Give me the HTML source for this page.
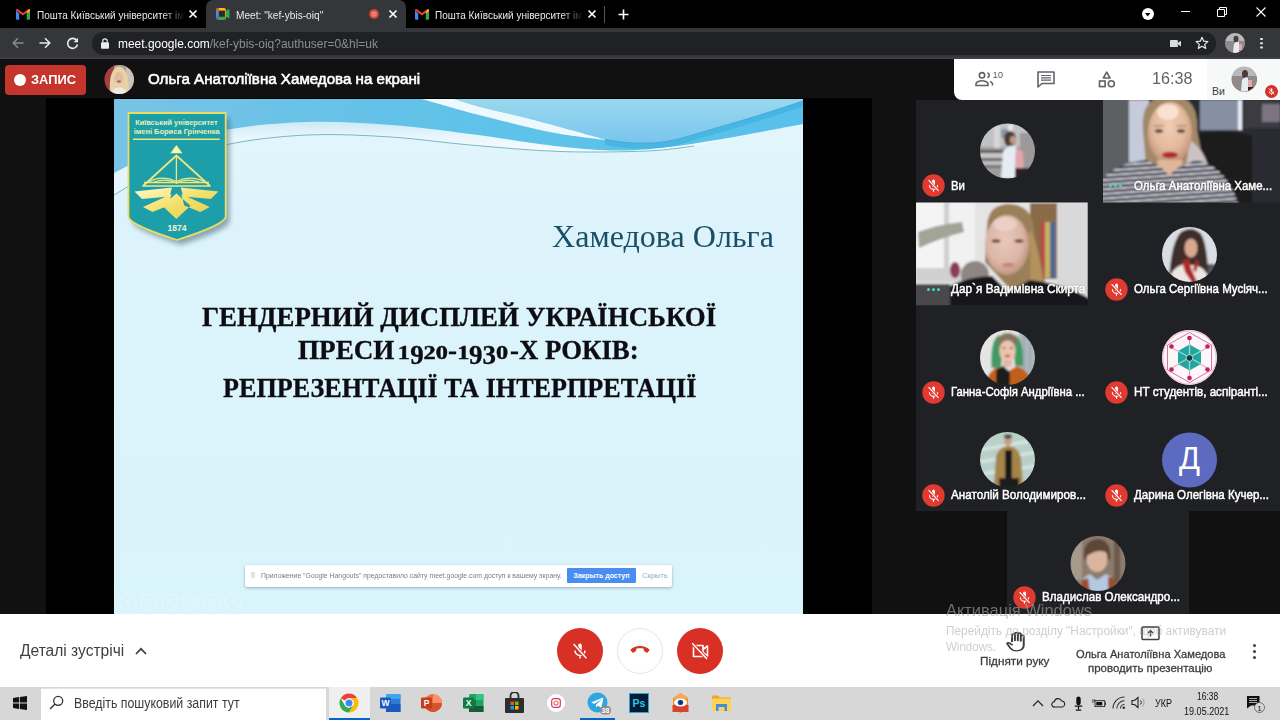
<!DOCTYPE html>
<html lang="uk">
<head>
<meta charset="utf-8">
<title>Meet: "kef-ybis-oiq"</title>
<style>
*{box-sizing:border-box;margin:0;padding:0}
html,body{width:1280px;height:720px;overflow:hidden;background:#111;font-family:"Liberation Sans",sans-serif;}
.abs{position:absolute}
#root{position:relative;width:1280px;height:720px;overflow:hidden;background:#111}
/* chrome */
#tabstrip{left:0;top:0;width:1280px;height:28px;background:#000}
#toolbar{left:0;top:28px;width:1280px;height:31px;background:#35363a;border-bottom:2px solid #3f4043}
#urlpill{left:92px;top:32px;width:1124px;height:23px;border-radius:12px;background:#202124}
.tabtxt{color:#e8eaed;font-size:11px;line-height:14px;white-space:nowrap;top:7.500px;transform-origin:0 50%;transform:scaleX(.908)}
#acttab{left:206px;top:0;width:200px;height:28px;background:#35363a;border-radius:7px 7px 0 0}
/* meet */
#blackband{left:45.500px;top:98px;width:826px;height:516px;background:#000}
#slide{left:114px;top:99px;width:689px;height:515px;background:#d9f1fa;overflow:hidden}
#tiles{left:916px;top:100px;width:364px;height:411px;background:#202124}
#tile9{left:1007px;top:511px;width:182px;height:103px;background:#202124}
.nm{color:#fff;font-size:12.500px;line-height:15px;white-space:nowrap;transform-origin:0 50%;-webkit-text-stroke:.5px #fff;text-shadow:0 0 2px rgba(0,0,0,.6)}
.mic{width:22px;height:22px;border-radius:50%;background:#d93025}
.av{width:55px;height:55px;border-radius:50%;overflow:hidden}
#botbar{left:0;top:614px;width:1280px;height:73px;background:#fff}
#taskbar{left:0;top:687px;width:1280px;height:33px;background:#d7d7d7}
.rbtn{width:46px;height:46px;border-radius:50%;background:#d93025;top:628px}
.gtxt{color:#3c4043;font-size:11.500px;white-space:nowrap;-webkit-text-stroke:.3px #3c4043}
.st{-webkit-text-stroke:.3px #0c0c12;font-family:"Liberation Serif",serif;font-weight:bold;font-size:26.400px;line-height:1;color:#0c0c12;white-space:nowrap;transform-origin:0 50%}
.os{font-size:19px;-webkit-text-stroke:.4px #0c0c12;display:inline-block;transform:scaleX(1.25);margin:0 1.200px}.dn{position:relative;top:5.500px}
.tk{top:693px;width:20px;height:20px}
</style>
</head>
<body>
<div id="root">

<!-- ===== CHROME TAB STRIP ===== -->
<div id="tabstrip" class="abs"></div>
<div id="acttab" class="abs"></div>
<div id="toolbar" class="abs"></div>
<div id="urlpill" class="abs"></div>
<!-- tab 1 -->
<svg class="abs" style="left:16px;top:9px" width="14" height="11" viewBox="0 0 14 11"><path d="M0 1.2v8.6a1 1 0 0 0 1 1h2.2V4.6L0 1.2z" fill="#4285f4"/><path d="M14 1.2v8.6a1 1 0 0 1-1 1h-2.200V4.600L14 1.200z" fill="#34a853"/><path d="M0 1.200 7 6.600l7-5.400V.900c0-1-1.200-1.300-2-.700L7 4.000 2 .200C1.200-.400 0-.100 0 .900z" fill="#ea4335"/><path d="M10.800 2.5 14 0v2.200l-3.200 2.400z" fill="#fbbc04"/></svg>
<div class="abs tabtxt" style="left:37px;width:163px;overflow:hidden;-webkit-mask-image:linear-gradient(90deg,#000 85%,transparent)">Пошта Київський університет імені</div>
<svg class="abs" style="left:188px;top:9px" width="10" height="10" viewBox="0 0 10 10"><path d="M1.500 1.500l7 7M8.500 1.500l-7 7" stroke="#fff" stroke-width="1.700"/></svg>
<!-- tab 2 active -->
<svg class="abs" style="left:216px;top:8px" width="13.500" height="11.500" viewBox="0 0 15 13"><rect x="0" y="0" width="11" height="13" rx="2" fill="#fbbc04"/><path d="M0 3h3V0H2a2 2 0 0 0-2 2z" fill="#ea4335"/><rect x="0" y="3" width="3" height="7" fill="#4285f4"/><path d="M0 10h3v3H2a2 2 0 0 1-2-2z" fill="#1a73e8"/><rect x="3" y="10" width="8" height="3" fill="#34a853"/><path d="M11 3 14.200 1.500c.400-.300.800 0 .800.400v9.200c0 .400-.400.700-.800.400L11 10z" fill="#34a853"/><rect x="3" y="3" width="7" height="7" fill="#2a2b2e"/></svg>
<div class="abs tabtxt" style="left:236px;transform:scaleX(.922)">Meet: "kef-ybis-oiq"</div>
<div class="abs" style="left:369px;top:9px;width:10px;height:10px;border-radius:50%;background:#ec7a70;border:2px solid #c4453b"></div>
<svg class="abs" style="left:387.500px;top:9px" width="10" height="10" viewBox="0 0 10 10"><path d="M1.500 1.500l7 7M8.500 1.500l-7 7" stroke="#fff" stroke-width="1.700"/></svg>
<!-- tab 3 -->
<svg class="abs" style="left:415px;top:9px" width="14" height="11" viewBox="0 0 14 11"><path d="M0 1.2v8.6a1 1 0 0 0 1 1h2.2V4.6L0 1.2z" fill="#4285f4"/><path d="M14 1.2v8.6a1 1 0 0 1-1 1h-2.200V4.600L14 1.200z" fill="#34a853"/><path d="M0 1.200 7 6.600l7-5.400V.900c0-1-1.200-1.300-2-.700L7 4.000 2 .200C1.200-.400 0-.100 0 .900z" fill="#ea4335"/><path d="M10.800 2.5 14 0v2.200l-3.200 2.400z" fill="#fbbc04"/></svg>
<div class="abs tabtxt" style="left:435px;width:163px;overflow:hidden;-webkit-mask-image:linear-gradient(90deg,#000 85%,transparent)">Пошта Київський університет імені</div>
<svg class="abs" style="left:587px;top:9px" width="10" height="10" viewBox="0 0 10 10"><path d="M1.500 1.500l7 7M8.500 1.500l-7 7" stroke="#fff" stroke-width="1.700"/></svg>
<div class="abs" style="left:604px;top:6px;width:1px;height:17px;background:#555"></div>
<svg class="abs" style="left:617.500px;top:8.500px" width="11" height="11" viewBox="0 0 11 11"><path d="M5.500 .5v10M.5 5.500h10" stroke="#fff" stroke-width="1.600"/></svg>
<!-- window controls -->
<div class="abs" style="left:1141.700px;top:8.300px;width:12px;height:12px;border-radius:50%;background:#fff"></div>
<svg class="abs" style="left:1145px;top:13px" width="5.400" height="3.800" viewBox="0 0 7 5"><path d="M0 0h7L3.500 4.500z" fill="#000"/></svg>
<div class="abs" style="left:1181px;top:11px;width:9px;height:1px;background:#fff"></div>
<svg class="abs" style="left:1217px;top:7px" width="10" height="10" viewBox="0 0 10 10"><path d="M.5 2.500h7v7h-7zM2.500 2.500v-2h7v7h-2" fill="none" stroke="#fff" stroke-width="1"/></svg>
<svg class="abs" style="left:1256px;top:7px" width="10" height="10" viewBox="0 0 10 10"><path d="M.5 .5l9 9M9.500 .5l-9 9" stroke="#fff" stroke-width="1.100"/></svg>
<!-- toolbar icons -->
<svg class="abs" style="left:12px;top:37px" width="12" height="12" viewBox="0 0 12 12"><path d="M11.500 6H1.500M6 1.200 1.200 6 6 10.800" fill="none" stroke="#8a8b8e" stroke-width="1.500"/></svg>
<svg class="abs" style="left:39px;top:37px" width="12" height="12" viewBox="0 0 12 12"><path d="M.5 6h10M6 1.200 10.800 6 6 10.800" fill="none" stroke="#e8eaed" stroke-width="1.500"/></svg>
<svg class="abs" style="left:65.500px;top:36.500px" width="13" height="13" viewBox="0 0 13 13"><path d="M10.600 3.300A5 5 0 1 0 11.500 7.500" fill="none" stroke="#e8eaed" stroke-width="1.600"/><path d="M12 .8v4.400H7.600z" fill="#e8eaed"/></svg>
<svg class="abs" style="left:101px;top:38px" width="8" height="11" viewBox="0 0 8 11"><rect x="0" y="4.200" width="8" height="6.500" rx="1" fill="#e8eaed"/><path d="M1.800 4.500V3a2.200 2.200 0 0 1 4.400 0v1.500" fill="none" stroke="#e8eaed" stroke-width="1.200"/></svg>
<div class="abs" style="left:118px;top:36px;font-size:13px;color:#fff;white-space:nowrap;transform-origin:0 50%;transform:scaleX(.92)">meet.google.com<span style="color:#8a8f94">/kef-ybis-oiq?authuser=0&amp;hl=uk</span></div>
<svg class="abs" style="left:1169.500px;top:39.500px" width="11" height="7.100" viewBox="0 0 14 9"><rect x="0" y="0" width="10" height="9" rx="1" fill="#dadce0"/><path d="M10 3.500 14 .8v7.400L10 5.500z" fill="#dadce0"/></svg>
<svg class="abs" style="left:1195px;top:36px" width="14" height="14" viewBox="0 0 14 14"><path d="M7 1.300l1.700 3.900 4.200.400-3.200 2.800 1 4.100L7 10.300 3.300 12.500l1-4.100L1.100 5.600l4.200-.400z" fill="none" stroke="#e8eaed" stroke-width="1.200" stroke-linejoin="round"/></svg>
<div class="abs" style="left:1225px;top:33px;width:20px;height:20px;border-radius:50%;background:radial-gradient(circle at 55% 60%,#e9e6e6 0 22%,#8d8482 45%,#5b5452 100%)"></div>
<div class="abs" style="left:1260.200px;top:37.700px;width:2.800px;height:2.800px;border-radius:50%;background:#e8eaed;box-shadow:0 4.300px 0 #e8eaed,0 8.600px 0 #e8eaed"></div>

<!-- ===== MEET MAIN ===== -->
<div class="abs" style="left:5px;top:65px;width:81px;height:30px;border-radius:4px;background:#c5352b"></div>
<div class="abs" style="left:14px;top:74px;width:12px;height:12px;border-radius:50%;background:#fff"></div>
<div class="abs" style="left:31px;top:72px;font-size:13px;font-weight:bold;color:#fff;white-space:nowrap;transform-origin:0 50%;transform:scaleX(.99)">ЗАПИС</div>
<div class="abs" style="left:104.500px;top:65px;width:29px;height:29px;border-radius:50%;background:radial-gradient(ellipse 30% 32% at 52% 48%,#e9c9b4 0 70%,transparent 100%),radial-gradient(ellipse 55% 60% at 50% 60%,#eadbb8 0 60%,transparent 100%),linear-gradient(90deg,#b04a44 0 35%,#a89a92 60%,#c9c2bb 100%)"></div>
<div class="abs" style="left:148px;top:70px;font-size:15.500px;-webkit-text-stroke:.6px #fff;color:#fff;white-space:nowrap;transform-origin:0 50%;transform:scaleX(.976)">Ольга Анатоліївна Хамедова на екрані</div>
<!-- right white panel -->
<div class="abs" style="left:954px;top:59px;width:326px;height:40.500px;background:#fff;border-radius:0 0 0 8px"></div>
<div class="abs" style="left:1207px;top:59px;width:73px;height:40.500px;background:#f7f8f8"></div>
<svg class="abs" style="left:975px;top:71px" width="20" height="16" viewBox="0 0 20 16"><circle cx="7" cy="4.300" r="2.700" fill="none" stroke="#5f6368" stroke-width="1.600"/><path d="M1 14.500v-1.800c0-2 4-3 6-3s6 1 6 3v1.800z" fill="none" stroke="#5f6368" stroke-width="1.600"/><path d="M12.500 1.800a2.700 2.700 0 0 1 0 5M15 10.500c1.500.600 2.500 1.400 2.500 2.600v1.400" fill="none" stroke="#5f6368" stroke-width="1.600"/></svg>
<div class="abs" style="left:992.500px;top:69px;font-size:9.500px;color:#5f6368">10</div>
<svg class="abs" style="left:1036.500px;top:71px" width="18" height="17" viewBox="0 0 18 17"><path d="M1 1h16v11.500H5L1 16z" fill="none" stroke="#5f6368" stroke-width="1.600" stroke-linejoin="round"/><path d="M4 4.500h10M4 6.800h10M4 9.100h10" stroke="#5f6368" stroke-width="1.200"/></svg>
<svg class="abs" style="left:1097.500px;top:71px" width="18" height="17" viewBox="0 0 18 17"><path d="M8.700 1.200 12 7H5.400z" fill="none" stroke="#5f6368" stroke-width="1.600" stroke-linejoin="round"/><rect x="1.500" y="10" width="5.600" height="5.600" fill="none" stroke="#5f6368" stroke-width="1.600"/><circle cx="13.300" cy="12.800" r="3" fill="none" stroke="#5f6368" stroke-width="1.600"/></svg>
<div class="abs" style="left:1152px;top:69px;font-size:17px;color:#5f6368;white-space:nowrap;transform-origin:0 50%;transform:scaleX(.95)">16:38</div>
<div class="abs" style="left:1212px;top:85px;font-size:10.500px;color:#3c4043;white-space:nowrap">Ви</div>
<div class="abs" style="left:1231.500px;top:66.500px;width:25px;height:25px;border-radius:50%;background:radial-gradient(circle at 55% 62%,#eceaea 0 20%,#8d8482 45%,#5b5452 100%)"></div>
<div class="abs" style="left:1264.500px;top:84.500px;width:13px;height:13px;border-radius:50%;background:#d93025"></div>
<svg class="abs" style="left:1264.500px;top:84.500px" width="13" height="13" viewBox="0 0 23 23"><rect x="10" y="5.600" width="3" height="7.300" rx="1.500" fill="#fff"/><path d="M7.400 11.300a4.100 4.100 0 0 0 8.200 0M11.500 15.400v2.400" fill="none" stroke="#fff" stroke-width="1.400"/><path d="M6.600 6.100 16.600 16.800" stroke="#fff" stroke-width="1.400"/></svg>
<div id="blackband" class="abs"></div>
<div id="slide" class="abs">
<!--SLIDEBG-->
<svg class="abs" style="left:0;top:0" width="689" height="515" viewBox="0 0 689 515">
<defs><linearGradient id="gbg" x1="0" y1="0" x2="0" y2="1"><stop offset="0" stop-color="#e4f6fc"/><stop offset=".25" stop-color="#dcf3fb"/><stop offset="1" stop-color="#daf4fb"/></linearGradient><linearGradient id="gtop" x1="0" y1="0" x2="1" y2="0"><stop offset="0" stop-color="#78c3e5"/><stop offset=".35" stop-color="#66c1e7"/><stop offset=".6" stop-color="#5dc3e9"/><stop offset="1" stop-color="#58c0ea"/></linearGradient><linearGradient id="gright" x1="0" y1="0" x2="0" y2="1"><stop offset="0" stop-color="#9ddbee"/><stop offset="1" stop-color="#79c5ee"/></linearGradient><linearGradient id="gwh" gradientUnits="userSpaceOnUse" x1="0" y1="20" x2="0" y2="54"><stop offset="0" stop-color="#c6e8f6"/><stop offset=".5" stop-color="#e8f6fc"/><stop offset="1" stop-color="#f7fcff"/></linearGradient><linearGradient id="gfade" gradientUnits="userSpaceOnUse" x1="0" y1="0" x2="150" y2="0"><stop offset="0" stop-color="#fff" stop-opacity=".15"/><stop offset="1" stop-color="#fff" stop-opacity="1"/></linearGradient><mask id="mfade" maskUnits="userSpaceOnUse" x="0" y="0" width="689" height="515"><rect width="689" height="515" fill="url(#gfade)"/></mask><filter id="wbl" x="-2%" y="-10%" width="104%" height="130%"><feGaussianBlur stdDeviation=".7"/></filter></defs>
<rect width="689" height="515" fill="url(#gbg)"/>
<g filter="url(#wbl)">
<path d="M0 -5L0.0 96.0C8.3 91.3 31.5 76.3 50.0 68.0C68.5 59.7 87.2 51.3 111.0 46.0C134.8 40.7 165.3 37.3 193.0 36.0C220.7 34.7 249.8 36.3 277.0 38.0C304.2 39.7 327.8 43.6 356.0 46.0C384.2 48.4 416.5 51.5 446.0 52.5C475.5 53.5 510.7 52.9 533.0 52.0C555.3 51.1 572.2 47.8 580.0 47.0L689 25L689 -5Z" fill="url(#gwh)" mask="url(#mfade)"/>
<path d="M-5 -5L-5 74L0.0 74.0C8.3 70.0 31.5 57.2 50.0 50.0C68.5 42.8 87.2 35.5 111.0 31.0C134.8 26.5 165.3 23.8 193.0 23.0C220.7 22.2 249.8 24.0 277.0 26.0C304.2 28.0 327.8 31.4 356.0 35.0C384.2 38.6 421.2 44.8 446.0 47.5C470.8 50.2 486.8 51.4 505.0 51.5C523.2 51.6 538.8 49.8 555.0 48.0C571.2 46.2 587.7 43.3 602.0 41.0C616.3 38.7 626.5 36.7 641.0 34.0C655.5 31.3 681.0 26.5 689.0 25.0L695 25L695 -5Z" fill="url(#gtop)"/>
<path d="M340 -5L340 0L340.0 0.0C344.3 1.3 353.3 4.7 366.0 8.0C378.7 11.3 401.5 16.3 416.0 20.0C430.5 23.7 440.5 26.6 453.0 30.0C465.5 33.4 484.7 38.8 491.0 40.5L491.0 40.5C495.8 41.1 509.3 43.8 520.0 44.0C530.7 44.2 541.3 44.5 555.0 42.0C568.7 39.5 587.7 33.1 602.0 29.0C616.3 24.9 626.5 22.0 641.0 17.5C655.5 13.0 681.0 4.6 689.0 2.0L695 3L695 -5Z" fill="url(#gright)"/>
<path d="M340.0 0.0C344.3 1.3 353.3 4.7 366.0 8.0C378.7 11.3 401.5 16.3 416.0 20.0C430.5 23.7 440.5 26.6 453.0 30.0C465.5 33.4 484.7 38.8 491.0 40.5L491.0 41.0C482.7 39.8 457.7 37.1 441.0 34.0C424.3 30.9 406.2 26.2 391.0 22.5C375.8 18.8 363.8 15.8 350.0 12.0C336.2 8.2 315.0 2.0 308.0 0.0Z" fill="#eef9fd"/>
<path d="M491.0 40.5C495.8 41.1 509.3 43.8 520.0 44.0C530.7 44.2 541.3 44.5 555.0 42.0C568.7 39.5 587.7 33.1 602.0 29.0C616.3 24.9 626.5 22.0 641.0 17.5C655.5 13.0 681.0 4.6 689.0 2.0" fill="none" stroke="#2fa9dc" stroke-width="5" opacity=".45" transform="translate(0,3)"/>
</g>
<path d="M0.0 96.0C8.3 91.3 31.5 76.3 50.0 68.0C68.5 59.7 87.2 51.3 111.0 46.0C134.8 40.7 165.3 37.3 193.0 36.0C220.7 34.7 249.8 36.3 277.0 38.0C304.2 39.7 327.8 43.6 356.0 46.0C384.2 48.4 416.5 51.5 446.0 52.5C475.5 53.5 510.7 52.9 533.0 52.0C555.3 51.1 572.2 47.8 580.0 47.0" fill="none" stroke="#5aa9b9" stroke-width="1" opacity=".8"/>
<path d="M491.0 40.5C495.8 41.1 509.3 43.8 520.0 44.0C530.7 44.2 541.3 44.5 555.0 42.0C568.7 39.5 587.7 33.1 602.0 29.0C616.3 24.9 626.5 22.0 641.0 17.5C655.5 13.0 681.0 4.6 689.0 2.0" fill="none" stroke="#3a9ed0" stroke-width="1" opacity=".7"/>
</svg>
<!--/SLIDEBG-->
<!--CREST-->
<svg class="abs" style="left:6px;top:6px" width="122" height="150" viewBox="-8 -8 122 150">
<defs><linearGradient id="gold" x1="0" y1="0" x2="1" y2="1"><stop offset="0" stop-color="#fffbd0"/><stop offset=".5" stop-color="#f3e06a"/><stop offset="1" stop-color="#e4cc50"/></linearGradient>
<filter id="csh" x="-20%" y="-20%" width="150%" height="150%"><feGaussianBlur stdDeviation="2.500"/></filter></defs>
<path d="M.5 0H97.700V104Q96 112 49 127Q2 112 .5 104Z" fill="#3a5a68" opacity=".5" filter="url(#csh)" transform="translate(4,5)"/>
<path d="M.5 0H97.700V104Q96 112 49 127Q2 112 .5 104Z" fill="#1c9fa9" stroke="#ecdc62" stroke-width="1.800"/>
<text x="48.400" y="11.700" font-family="Liberation Sans,sans-serif" font-size="6.400" font-weight="bold" fill="#eaf0b8" text-anchor="middle" textLength="82.500" lengthAdjust="spacingAndGlyphs">Київський університет</text>
<text x="48.700" y="20.800" font-family="Liberation Sans,sans-serif" font-size="6.400" font-weight="bold" fill="#eaf0b8" text-anchor="middle" textLength="86" lengthAdjust="spacingAndGlyphs">імені Бориса Грінченка</text>
<path d="M5 26.200H91.700" stroke="#f3e57c" stroke-width="1.500"/>
<path d="M48.400 32 54.400 40.300H42.400Z" fill="#fbf4ac"/>
<path d="M48.400 42.500 15 73H82ZM16 69.500H81" fill="none" stroke="#f3e57c" stroke-width="1.700" stroke-linejoin="round"/>
<path d="M48.400 44V71M20 69Q34 61.500 48.400 68.500Q63 61.500 77 69M26 69Q38 65 48.400 70Q59 65 71 69" fill="none" stroke="#f3e57c" stroke-width="1.300"/>
<path d="M6.500 78.500 44 74.500 41.500 83.500 14 86ZM90.300 78.500 52.800 74.500 55.300 83.500 82.800 86ZM15 94 43.500 81 40.500 92.500 24.500 99ZM81.800 94 53.300 81 56.300 92.500 72.300 99ZM48.400 80.500 62.500 92.700 48.400 106 34.300 92.700Z" fill="url(#gold)"/>
<text x="49" y="118.400" font-family="Liberation Sans,sans-serif" font-size="8.500" font-weight="bold" fill="#f6f2cc" text-anchor="middle" textLength="19" lengthAdjust="spacingAndGlyphs">1874</text>
</svg>

<!--/CREST-->
<!--SLIDETXT-->
<div class="abs st" style="left:87.500px;top:204.700px;transform:scaleX(1.019)">ГЕНДЕРНИЙ ДИСПЛЕЙ УКРАЇНСЬКОЇ</div>
<div class="abs st" style="left:184px;top:237.700px;transform:scaleX(1.027)">ПРЕСИ</div><div class="abs st" style="left:284px;top:237.700px;transform:scaleX(1.023)"><span class="os">1</span><span class="dn">9</span><span class="os">2</span><span class="os">0</span>-<span class="os">1</span><span class="dn">93</span><span class="os">0</span></div><div class="abs st" style="left:396px;top:237.700px;transform:scaleX(1.015)">-Х РОКІВ:</div>
<div class="abs st" style="left:108.500px;top:275.700px;transform:scaleX(.99)">РЕПРЕЗЕНТАЦІЇ ТА ІНТЕРПРЕТАЦІЇ</div>
<div class="abs" style="left:438.400px;top:122.200px;font-family:'Liberation Serif',serif;font-size:31.700px;line-height:1;color:#1a4f66;white-space:nowrap;transform-origin:0 50%;transform:scaleX(1.012)">Хамедова Ольга</div>
<!-- share notification -->
<div class="abs" style="left:131px;top:465.500px;width:426.500px;height:22px;background:#fff;border-radius:2px;box-shadow:0 1px 3px rgba(60,90,110,.45)"></div>
<div class="abs" style="left:136.500px;top:473px;width:4px;height:6px;border-radius:1px;background:#e3e3e3"></div>
<div class="abs" style="left:146.600px;top:472px;font-size:7.500px;line-height:9px;color:#7d7d7d;white-space:nowrap;transform-origin:0 50%;transform:scaleX(.914)">Приложение "Google Hangouts" предоставило сайту meet.google.com доступ к вашему экрану.</div>
<div class="abs" style="left:453px;top:469px;width:69px;height:15px;background:#4a8df0;border-radius:1px"></div>
<div class="abs" style="left:453px;top:472px;width:69px;text-align:center;font-size:7px;line-height:9px;font-weight:bold;color:#fff;white-space:nowrap">Закрыть доступ</div>
<div class="abs" style="left:528px;top:472px;font-size:7.500px;line-height:9px;color:#8fb0d8;white-space:nowrap">Скрыть</div>
<!-- faint slideshow controls -->
<svg class="abs" style="left:4px;top:493px" width="130" height="20" viewBox="0 0 130 20" fill="none" stroke="#eefafd" stroke-width="1.200" opacity=".55"><circle cx="10" cy="10" r="8"/><circle cx="31" cy="10" r="8"/><circle cx="52" cy="10" r="8"/><circle cx="73" cy="10" r="8"/><circle cx="94" cy="10" r="8"/><circle cx="115" cy="10" r="8"/><path d="M12 6l-4 4 4 4M29 6l4 4-4 4M49 13l6-7M70 7h6v6h-6zM92 9a3 3 0 1 0 4 0M112 10h6"/></svg>

<!--/SLIDETXT-->
</div>
<div id="tiles" class="abs"></div>
<div id="tile9" class="abs"></div>
<!--PHOTOS-->
<svg class="abs" style="left:0;top:0" width="1280" height="720" viewBox="0 0 1280 720">
<defs>
<filter id="b1" x="-5%" y="-5%" width="110%" height="110%"><feGaussianBlur stdDeviation="1.1"/></filter>
<filter id="b2" x="-5%" y="-5%" width="110%" height="110%"><feGaussianBlur stdDeviation="2"/></filter>
<filter id="b03" x="-5%" y="-5%" width="110%" height="110%"><feGaussianBlur stdDeviation=".45"/></filter>
<filter id="b05" x="-5%" y="-5%" width="110%" height="110%"><feGaussianBlur stdDeviation=".8"/></filter>
<clipPath id="cv2"><rect x="1103" y="100" width="177" height="102.500"/></clipPath>
<clipPath id="cv3"><rect x="916" y="202.500" width="171.700" height="102.800"/></clipPath>
<clipPath id="ca1"><circle cx="1007.500" cy="151" r="27.500"/></clipPath>
<clipPath id="ca4"><circle cx="1189.500" cy="254.400" r="27.500"/></clipPath>
<clipPath id="ca5"><circle cx="1007.500" cy="357.500" r="27.500"/></clipPath>
<clipPath id="ca6"><circle cx="1189.500" cy="357.400" r="27.500"/></clipPath>
<clipPath id="ca7"><circle cx="1007.500" cy="459.500" r="27.500"/></clipPath>
<clipPath id="ca9"><circle cx="1098" cy="563.500" r="27.500"/></clipPath>
<clipPath id="cah"><circle cx="119" cy="79.500" r="14.500"/></clipPath>
<clipPath id="cap"><circle cx="1244" cy="79" r="12.500"/></clipPath>
<clipPath id="cat"><circle cx="1235" cy="43" r="10"/></clipPath>
<pattern id="stripes" width="4" height="4.600" patternUnits="userSpaceOnUse" patternTransform="rotate(-4)"><rect width="4" height="4.600" fill="#dcdce2"/><rect width="4" height="2.700" fill="#262a3a"/></pattern>
<radialGradient id="gf2" cx=".48" cy=".4" r=".62"><stop offset="0" stop-color="#f0cdb4"/><stop offset=".6" stop-color="#e2b99e"/><stop offset="1" stop-color="#bd8e74"/></radialGradient>
<radialGradient id="gf3" cx=".45" cy=".42" r=".62"><stop offset="0" stop-color="#e9c8ba"/><stop offset=".65" stop-color="#dcb6a7"/><stop offset="1" stop-color="#b98f7c"/></radialGradient>
</defs>

<!-- VIDEO 2: Olga -->
<g clip-path="url(#cv2)"><g filter="url(#b1)">
<rect x="1100" y="97" width="184" height="110" fill="#2b2c31"/>
<rect x="1100" y="97" width="32" height="110" fill="#5d6163"/>
<rect x="1129" y="100" width="20" height="62" fill="#c5cbdb"/>
<rect x="1200" y="100" width="42" height="30" fill="#8790a3"/>
<rect x="1238" y="100" width="4" height="30" fill="#e8ecf6"/>
<rect x="1244" y="100" width="36" height="28" fill="#3a3a42"/>
<rect x="1262" y="104" width="18" height="18" fill="#7a7480"/>
<path d="M1196 134Q1225 128 1252 136V210H1196Z" fill="#1b1b1e"/>
<path d="M1143 130Q1140 96 1170 95Q1199 96 1197 130L1204 166H1146Z" fill="#a08868"/>
<path d="M1190 140Q1204 150 1208 166H1186Z" fill="#cbc2c4"/>
<ellipse cx="1170" cy="133" rx="22" ry="31" fill="url(#gf2)"/>
<ellipse cx="1168" cy="112" rx="11" ry="8" fill="#fbe8d6" opacity=".85"/>
<ellipse cx="1159" cy="131" rx="4.200" ry="1.800" fill="#4f3a32"/><ellipse cx="1181" cy="131" rx="4.200" ry="1.800" fill="#4f3a32"/>
<path d="M1154 126h10M1176 126h10" stroke="#8a6a50" stroke-width="1.200"/>
<ellipse cx="1170" cy="155" rx="8" ry="3.300" fill="#b32c2a"/>
<rect x="1158" y="160" width="24" height="14" fill="#dbb096"/>
<path d="M1096 210V186Q1112 164 1146 160L1169 172 1196 160Q1228 166 1240 210Z" fill="url(#stripes)"/>
<path d="M1156 161 1169 176 1184 161Z" fill="#e1b79c"/>
</g></g>

<!-- VIDEO 3: Darya -->
<g clip-path="url(#cv3)"><g filter="url(#b1)">
<rect x="912" y="199" width="180" height="110" fill="#e4e4e4"/>
<rect x="916" y="202" width="28" height="76" fill="#f4f4f4"/>
<rect x="944" y="202" width="5" height="76" fill="#cfcfcf"/>
<rect x="949" y="202" width="26" height="70" fill="#f1f1f1"/>
<path d="M918 232Q940 224 962 222L964 232Q940 238 919 248Z" fill="#a3a398"/>
<rect x="916" y="268" width="60" height="14" fill="#d2d0cf"/>
<ellipse cx="955" cy="270" rx="5" ry="8" fill="#8a3a5a"/>
<rect x="1030" y="203" width="27" height="76" fill="#8a6a48"/>
<rect x="1040" y="222" width="5" height="56" fill="#b0504a"/><rect x="1045" y="222" width="5" height="56" fill="#c9b060"/><rect x="1050" y="222" width="5" height="56" fill="#4a6a98"/>
<rect x="1057" y="203" width="32" height="100" fill="#d9d9d9"/>
<ellipse cx="975" cy="275" rx="14" ry="14" fill="#8d8683"/>
<path d="M987 226Q988 204 1010 204Q1034 206 1034 232L1049 300H1020L985 262Z" fill="#9a7f58"/>
<ellipse cx="1007" cy="245" rx="22" ry="30" fill="url(#gf3)"/>
<ellipse cx="1005" cy="224" rx="12" ry="7" fill="#edd5ca" opacity=".8"/>
<ellipse cx="996" cy="241" rx="4.500" ry="1.700" fill="#5e463e"/><ellipse cx="1019" cy="241" rx="4.500" ry="1.700" fill="#5e463e"/>
<ellipse cx="1008" cy="265" rx="6.500" ry="2.200" fill="#c8847c"/>
<path d="M1031 230Q1040 250 1046 304H1026Q1034 270 1028 236Z" fill="#b3925c"/>
<path d="M912 312V286H950Q970 276 992 276L1008 292 1030 280Q1066 284 1092 300V312Z" fill="#18181b"/>
<rect x="910" y="284" width="40" height="28" fill="#48484b"/>
</g></g>

<!-- AVATAR 1: Ви -->
<g clip-path="url(#ca1)"><g filter="url(#b05)">
<rect x="978" y="121" width="60" height="60" fill="#a19d9c"/>
<rect x="978" y="121" width="60" height="26" fill="#bfc1c4"/>
<rect x="994" y="126" width="6" height="22" fill="#d5d7da"/><rect x="1008" y="124" width="5" height="16" fill="#e2e4e8"/><rect x="1001" y="129" width="7" height="9" fill="#8c97a5"/>
<rect x="1020" y="133" width="16" height="36" fill="#9d9899"/>
<rect x="978" y="150" width="30" height="4" fill="#5a5658"/><rect x="978" y="158" width="30" height="3" fill="#6a6668"/><rect x="978" y="165" width="30" height="3" fill="#777"/>
<rect x="980" y="153" width="28" height="5" fill="#c9c6c6"/><rect x="982" y="161" width="26" height="4" fill="#c2bfbf"/>
<ellipse cx="1010" cy="139" rx="6" ry="8" fill="#4b3a36"/>
<ellipse cx="1013" cy="140" rx="3" ry="4" fill="#c79a86"/>
<path d="M1001 178 1003 152Q1008 144 1016 146L1015 178Z" fill="#e6edf2"/>
<path d="M1016 148 1023 152 1024 168 1015 170Z" fill="#e2a6ae"/>
<rect x="1015" y="168" width="14" height="12" fill="#2a2428"/>
</g></g>

<!-- AVATAR 4: Olga S -->
<g clip-path="url(#ca4)"><g filter="url(#b05)">
<rect x="1160" y="225" width="60" height="60" fill="#d9dee5"/>
<rect x="1204" y="264" width="16" height="14" fill="#55585c"/>
<path d="M1169 280Q1171 242 1181 232Q1192 225 1201 234Q1208 246 1208 278Z" fill="#3e2e29"/>
<ellipse cx="1191" cy="248" rx="6.500" ry="9.500" fill="#d8a78e"/>
<path d="M1168 284Q1170 268 1184 264L1198 266Q1208 270 1210 284Z" fill="#ece5e1"/>
<path d="M1182 261 1185 272 1193 284 1197 282 1191 268 1189 259ZM1196 260 1193 270 1196 272 1199 262Z" fill="#ae2a2a"/>
</g></g>

<!-- AVATAR 5: Ganna-Sofia -->
<g clip-path="url(#ca5)"><g filter="url(#b05)">
<rect x="978" y="328" width="60" height="60" fill="#e5e5e3"/>
<rect x="1019" y="328" width="20" height="60" fill="#adb7bd"/>
<path d="M1024 332v40M1030 332v44" stroke="#8e9aa2" stroke-width="1"/>
<path d="M991.500 368Q990 340 999 335L1003 338 1001 368ZM1023 366Q1024 342 1016 335L1013 338 1015 366Z" fill="#3f9a62"/>
<path d="M997 342Q1000 332.500 1008 333Q1016 333 1018 342L1016 345Q1008 340 999 345Z" fill="#857560"/>
<ellipse cx="1007.500" cy="351" rx="8.200" ry="10.800" fill="#ecc5b1"/>
<ellipse cx="1004" cy="348" rx="1.700" ry=".8" fill="#5a4238"/><ellipse cx="1011.500" cy="348" rx="1.700" ry=".8" fill="#5a4238"/>
<ellipse cx="1007.500" cy="356" rx="2.800" ry="1.200" fill="#b8564c"/>
<rect x="1003" y="360" width="9" height="7" fill="#e3b9a4"/>
<path d="M984 390Q986 372 998 367L1007 372 1017 366Q1032 372 1034 390Z" fill="#c0601e"/>
<path d="M996 390V370L1003 366 1010 372V390Z" fill="#1b1b1f"/>
</g></g>

<!-- AVATAR 6: NT logo -->
<g clip-path="url(#ca6)">
<rect x="1160" y="328" width="60" height="60" fill="#fdf6f9"/>
<circle cx="1189.500" cy="357.400" r="26.800" fill="none" stroke="#f0c6d8" stroke-width="1.600"/>
<path d="M1189.500 332.500 1211.500 345 1211.500 370 1189.500 382.500 1167.500 370 1167.500 345Z" fill="none" stroke="#c93a72" stroke-width=".7"/>
<path d="M1189.500 338v39M1172.500 348l34 19.600M1206.500 348l-34 19.600" stroke="#e68fb0" stroke-width="1"/>
<path d="M1189.500 344.500 1201 351 1201 364 1189.500 370.500 1178 364 1178 351Z" fill="#20a69b"/>
<path d="M1189.500 344.500v26M1178 351l23 13M1201 351l-23 13" stroke="#9fd4e6" stroke-width="1.300"/>
<circle cx="1189.500" cy="358" r="3.300" fill="#123c3c" stroke="#bfe9e4" stroke-width=".8"/>
<g fill="#c1215c"><circle cx="1189.500" cy="338" r="2.300"/><circle cx="1189.500" cy="378" r="2.300"/><circle cx="1171.500" cy="346.500" r="2.300"/><circle cx="1207.500" cy="346.500" r="2.300"/><circle cx="1171.500" cy="369.500" r="2.300"/><circle cx="1207.500" cy="369.500" r="2.300"/></g>
</g>

<!-- AVATAR 7: Anatoliy -->
<g clip-path="url(#ca7)"><g filter="url(#b05)">
<rect x="978" y="430" width="60" height="60" fill="#b9d0c9"/>
<path d="M980 450 1036 440M980 462 1036 452M980 474 1036 466" stroke="#d7e6e1" stroke-width="3"/>
<path d="M994 486 996 456Q1000 446 1008 446Q1018 446 1021 458L1023 486Z" fill="#a6844a"/>
<rect x="1005" y="450" width="7" height="38" fill="#18181c"/>
<rect x="999" y="478" width="20" height="12" fill="#1a1a1e"/>
<ellipse cx="1008" cy="441" rx="3.800" ry="5" fill="#c8a080"/>
<ellipse cx="1008" cy="436.500" rx="4" ry="2.200" fill="#5b4a3c"/>
</g></g>

<!-- AVATAR 8: Д -->
<circle cx="1189.500" cy="460" r="27.500" fill="#5c6bc0"/>
<text x="1189.500" y="469" font-family="Liberation Sans,sans-serif" font-size="31" fill="#fff" text-anchor="middle">Д</text>

<!-- AVATAR 9: Vladyslav -->
<g clip-path="url(#ca9)"><g filter="url(#b05)">
<rect x="1068" y="534" width="60" height="60" fill="#8b7b6d"/>
<rect x="1070" y="540" width="12" height="40" fill="#a59a8c"/><rect x="1114" y="540" width="6" height="44" fill="#6e5a48"/>
<path d="M1084 560Q1082 540 1098 539Q1112 540 1110 560Z" fill="#5a4636"/>
<ellipse cx="1097" cy="559" rx="10.500" ry="13" fill="#dcb59f"/>
<path d="M1086 552Q1092 542 1108 546L1108 553Q1098 548 1087 556Z" fill="#5a4636"/>
<path d="M1078 592Q1080 578 1090 574L1097 580 1106 574Q1116 578 1118 592Z" fill="#b6c9e3"/>
<path d="M1078 592 1082 580 1088 578 1090 592ZM1118 592 1114 578 1108 577 1108 592Z" fill="#9a4f2b"/>
</g></g>

<!-- header avatar (Olga) -->
<g clip-path="url(#cah)"><g filter="url(#b03)">
<rect x="103" y="63" width="32" height="33" fill="#a89c95"/>
<rect x="103" y="63" width="11" height="33" fill="#a43f3b"/>
<rect x="126" y="63" width="9" height="33" fill="#c9c3bc"/>
<path d="M110 96Q108 68 119 66.500Q130 68 128.500 96Z" fill="#e6d3a6"/>
<ellipse cx="119" cy="78" rx="4.600" ry="6" fill="#e4b9a2"/>
<ellipse cx="119" cy="81.500" rx="2" ry=".9" fill="#b5504a"/>
<path d="M109 96Q112 87.500 119 87.500Q126 87.500 129 96Z" fill="#f0e8e4"/>
</g></g>

<!-- own avatars (Meet top right + chrome toolbar) -->
<g clip-path="url(#cap)"><g filter="url(#b03)">
<rect x="1231" y="66" width="26" height="26" fill="#908a89"/><rect x="1231" y="66" width="26" height="10" fill="#b7b9bc"/>
<ellipse cx="1245" cy="74" rx="3" ry="4" fill="#4b3a36"/>
<path d="M1241 92 1242 80Q1245 76 1248 78L1248 92Z" fill="#e6edf2"/><rect x="1248" y="80" width="4" height="8" fill="#e2a6ae"/><rect x="1248" y="87" width="7" height="6" fill="#2a2428"/>
</g></g>
<g clip-path="url(#cat)"><g filter="url(#b03)">
<rect x="1225" y="33" width="20" height="20" fill="#908a89"/><rect x="1225" y="33" width="20" height="8" fill="#b7b9bc"/>
<ellipse cx="1236" cy="39" rx="2.500" ry="3.200" fill="#4b3a36"/>
<path d="M1233 53 1234 44Q1236 41 1239 42L1239 53Z" fill="#e6edf2"/><rect x="1239" y="44" width="3" height="6" fill="#e2a6ae"/>
</g></g>
</svg>

<!--/PHOTOS-->
<!--LABELS-->
<div class="abs nm" style="left:951.0px;top:178.6px;transform:scaleX(0.913)">Ви</div>
<svg class="abs" style="left:922.0px;top:174.0px" width="23" height="23" viewBox="0 0 23 23"><circle cx="11.5" cy="11.5" r="11.2" fill="#e13a31"/><rect x="10" y="5.600" width="3" height="7.300" rx="1.500" fill="#fff"/><path d="M7.400 11.300a4.100 4.100 0 0 0 8.200 0M11.500 15.400v2.400" fill="none" stroke="#fff" stroke-width="1.200"/><path d="M6.300 5.800 17 17.200" stroke="#e13a31" stroke-width="2.600"/><path d="M6.600 6.100 16.600 16.800" stroke="#fff" stroke-width="1.200"/></svg>
<div class="abs nm" style="left:1134.0px;top:178.6px;transform:scaleX(0.914)">Ольга Анатоліївна Хаме...</div>
<div class="abs" style="left:1109.0px;top:184.0px;width:3px;height:3px;border-radius:50%;background:#3ed8c2;box-shadow:5px 0 0 #3ed8c2,10px 0 0 #3ed8c2"></div>
<div class="abs nm" style="left:951.0px;top:282.1px;transform:scaleX(0.944)">Дар`я Вадимівна Скирта</div>
<div class="abs" style="left:927.0px;top:287.5px;width:3px;height:3px;border-radius:50%;background:#3ed8c2;box-shadow:5px 0 0 #3ed8c2,10px 0 0 #3ed8c2"></div>
<div class="abs nm" style="left:1133.8px;top:282.1px;transform:scaleX(0.920)">Ольга Сергіївна Мусіяч...</div>
<svg class="abs" style="left:1104.7px;top:277.5px" width="23" height="23" viewBox="0 0 23 23"><circle cx="11.5" cy="11.5" r="11.2" fill="#e13a31"/><rect x="10" y="5.600" width="3" height="7.300" rx="1.500" fill="#fff"/><path d="M7.400 11.300a4.100 4.100 0 0 0 8.200 0M11.500 15.400v2.400" fill="none" stroke="#fff" stroke-width="1.200"/><path d="M6.300 5.800 17 17.200" stroke="#e13a31" stroke-width="2.600"/><path d="M6.600 6.100 16.600 16.800" stroke="#fff" stroke-width="1.200"/></svg>
<div class="abs nm" style="left:951.3px;top:385.4px;transform:scaleX(0.907)">Ганна-Софія Андріївна ...</div>
<svg class="abs" style="left:922.0px;top:380.8px" width="23" height="23" viewBox="0 0 23 23"><circle cx="11.5" cy="11.5" r="11.2" fill="#e13a31"/><rect x="10" y="5.600" width="3" height="7.300" rx="1.500" fill="#fff"/><path d="M7.400 11.300a4.100 4.100 0 0 0 8.200 0M11.500 15.400v2.400" fill="none" stroke="#fff" stroke-width="1.200"/><path d="M6.300 5.800 17 17.200" stroke="#e13a31" stroke-width="2.600"/><path d="M6.600 6.100 16.600 16.800" stroke="#fff" stroke-width="1.200"/></svg>
<div class="abs nm" style="left:1134.0px;top:385.4px;transform:scaleX(0.930)">НТ студентів, аспіранті...</div>
<svg class="abs" style="left:1104.7px;top:380.8px" width="23" height="23" viewBox="0 0 23 23"><circle cx="11.5" cy="11.5" r="11.2" fill="#e13a31"/><rect x="10" y="5.600" width="3" height="7.300" rx="1.500" fill="#fff"/><path d="M7.400 11.300a4.100 4.100 0 0 0 8.200 0M11.500 15.400v2.400" fill="none" stroke="#fff" stroke-width="1.200"/><path d="M6.300 5.800 17 17.200" stroke="#e13a31" stroke-width="2.600"/><path d="M6.600 6.100 16.600 16.800" stroke="#fff" stroke-width="1.200"/></svg>
<div class="abs nm" style="left:951.0px;top:488.4px;transform:scaleX(0.933)">Анатолій Володимиров...</div>
<svg class="abs" style="left:922.0px;top:483.8px" width="23" height="23" viewBox="0 0 23 23"><circle cx="11.5" cy="11.5" r="11.2" fill="#e13a31"/><rect x="10" y="5.600" width="3" height="7.300" rx="1.500" fill="#fff"/><path d="M7.400 11.300a4.100 4.100 0 0 0 8.200 0M11.500 15.400v2.400" fill="none" stroke="#fff" stroke-width="1.200"/><path d="M6.300 5.800 17 17.200" stroke="#e13a31" stroke-width="2.600"/><path d="M6.600 6.100 16.600 16.800" stroke="#fff" stroke-width="1.200"/></svg>
<div class="abs nm" style="left:1134.0px;top:488.4px;transform:scaleX(0.923)">Дарина Олегівна Кучер...</div>
<svg class="abs" style="left:1104.7px;top:483.8px" width="23" height="23" viewBox="0 0 23 23"><circle cx="11.5" cy="11.5" r="11.2" fill="#e13a31"/><rect x="10" y="5.600" width="3" height="7.300" rx="1.500" fill="#fff"/><path d="M7.400 11.300a4.100 4.100 0 0 0 8.200 0M11.500 15.400v2.400" fill="none" stroke="#fff" stroke-width="1.200"/><path d="M6.300 5.800 17 17.200" stroke="#e13a31" stroke-width="2.600"/><path d="M6.600 6.100 16.600 16.800" stroke="#fff" stroke-width="1.200"/></svg>
<div class="abs nm" style="left:1041.5px;top:590.3px;transform:scaleX(0.928)">Владислав Олександро...</div>
<svg class="abs" style="left:1012.8px;top:585.7px" width="23" height="23" viewBox="0 0 23 23"><circle cx="11.5" cy="11.5" r="11.2" fill="#e13a31"/><rect x="10" y="5.600" width="3" height="7.300" rx="1.500" fill="#fff"/><path d="M7.400 11.300a4.100 4.100 0 0 0 8.200 0M11.500 15.400v2.400" fill="none" stroke="#fff" stroke-width="1.200"/><path d="M6.300 5.800 17 17.200" stroke="#e13a31" stroke-width="2.600"/><path d="M6.600 6.100 16.600 16.800" stroke="#fff" stroke-width="1.200"/></svg>
<!--/LABELS-->

<!-- ===== BOTTOM BAR ===== -->
<div id="botbar" class="abs"></div>
<!--BOTTOM-->
<div class="abs" style="left:20px;top:641px;font-size:16px;line-height:20px;color:#3c4043;white-space:nowrap;transform-origin:0 50%;transform:scaleX(.972)">Деталі зустрічі</div>
<svg class="abs" style="left:135px;top:646.500px" width="12" height="8" viewBox="0 0 12 8"><path d="M1 7 6 1.800 11 7" fill="none" stroke="#3c4043" stroke-width="1.700"/></svg>
<!-- call buttons -->
<div class="abs rbtn" style="left:557px"></div>
<div class="abs" style="left:617px;top:628px;width:46px;height:46px;border-radius:50%;background:#fff;border:1px solid #e3e5e8"></div>
<div class="abs rbtn" style="left:677px"></div>
<svg class="abs" style="left:569px;top:640px" width="22" height="22" viewBox="0 0 22 22"><rect x="9.200" y="3.500" width="3.600" height="9" rx="1.800" fill="#fff"/><path d="M6 10.500a5 5 0 0 0 10 0M11 15.500v3" fill="none" stroke="#fff" stroke-width="1.500"/><path d="M4.200 3.600 17.600 18.600" stroke="#d93025" stroke-width="3.400"/><path d="M4.600 4 17.400 18.200" stroke="#fff" stroke-width="1.500"/></svg>
<svg class="abs" style="left:630px;top:645px" width="20" height="10" viewBox="0 0 20 10"><path d="M10 1C6 1 2.800 2.300 .8 4.400c-.400.400-.400 1 0 1.400l1.700 1.700c.400.400.900.400 1.300.100l2-1.500c.300-.200.400-.500.400-.800V3.700c1.200-.400 2.500-.500 3.800-.500s2.600.100 3.800.500v1.600c0 .300.100.600.400.800l2 1.500c.400.300.900.300 1.300-.100l1.700-1.700c.400-.400.400-1 0-1.400C17.200 2.300 14 1 10 1z" fill="#d93025"/></svg>
<svg class="abs" style="left:689px;top:640px" width="22" height="22" viewBox="0 0 22 22"><path d="M4.500 5.500H14V16.500H4.500ZM14 9.500l4.500-3.500v10L14 12.500" fill="none" stroke="#fff" stroke-width="1.600" stroke-linejoin="round"/><path d="M2.800 2.800 18.400 19.400" stroke="#d93025" stroke-width="3.400"/><path d="M3.200 3.200 18 19" stroke="#fff" stroke-width="1.600"/></svg>
<!-- right controls -->
<svg class="abs" style="left:1005.500px;top:630.500px" width="20" height="21" viewBox="0 0 15 22" preserveAspectRatio="none"><path d="M4.500 11V4.200a1.100 1.100 0 0 1 2.200 0V10M6.700 10V2.600a1.100 1.100 0 0 1 2.200 0V10M8.900 10V3.200a1.100 1.100 0 0 1 2.200 0V10.500M11.100 10.500V5.400a1.100 1.100 0 0 1 2.200 0V15c0 3.500-2 5.800-5.300 5.800-2.400 0-3.700-1.100-4.800-3L1 13.500c-.400-.800.600-1.800 1.600-.900L4.500 14.500" fill="none" stroke="#3c4043" stroke-width="1.500" stroke-linejoin="round" stroke-linecap="round"/></svg>
<div class="abs gtxt" style="left:979.600px;top:654px;line-height:14px;transform-origin:0 50%;transform:scaleX(1.022)">Підняти руку</div>
<svg class="abs" style="left:1141px;top:626px" width="19" height="16" viewBox="0 0 19 16"><rect x="1" y="1" width="17" height="12.500" rx="1" fill="none" stroke="#3c4043" stroke-width="1.500"/><path d="M9.500 10.500V5M7 7l2.500-2.500L12 7" fill="none" stroke="#3c4043" stroke-width="1.400"/></svg>
<div class="abs gtxt" style="left:1075.500px;top:647px;line-height:14px;transform-origin:0 50%;transform:scaleX(.967)">Ольга Анатоліївна Хамедова</div>
<div class="abs gtxt" style="left:1088px;top:661px;line-height:14px;transform-origin:0 50%;transform:scaleX(.998)">проводить презентацію</div>
<div class="abs" style="left:1253px;top:643.500px;width:3.400px;height:3.400px;border-radius:50%;background:#3c4043;box-shadow:0 6px 0 #3c4043,0 12px 0 #3c4043"></div>
<!-- windows activation watermark -->
<div class="abs" style="left:946px;top:600px;font-size:17px;line-height:21px;color:rgba(168,168,168,.62);white-space:nowrap;transform-origin:0 50%;transform:scaleX(.967)">Активація Windows</div>
<div class="abs" style="left:946px;top:623.500px;font-size:12px;line-height:15px;color:rgba(165,165,165,.55);white-space:nowrap;transform-origin:0 50%;transform:scaleX(.988)">Перейдіть до розділу "Настройки", щоб активувати</div>
<div class="abs" style="left:946px;top:639.500px;font-size:12px;line-height:15px;color:rgba(165,165,165,.55);white-space:nowrap;transform-origin:0 50%;transform:scaleX(.96)">Windows.</div>

<!--/BOTTOM-->
<div id="taskbar" class="abs"></div>
<!--TASKBAR-->
<svg class="abs" style="left:13px;top:696px" width="14" height="14" viewBox="0 0 14 14"><path d="M0 2 6 1.100V6.600H0ZM6.800 1 14 0V6.600H6.800ZM0 7.400H6V12.900L0 12ZM6.800 7.400H14V14L6.800 13Z" fill="#111"/></svg>
<div class="abs" style="left:41px;top:688px;width:285px;height:32px;background:#fff;border-top:1px solid #e4e4e4"></div>
<svg class="abs" style="left:49px;top:695px" width="15" height="15" viewBox="0 0 15 15"><circle cx="9.200" cy="5.800" r="4.500" fill="none" stroke="#333" stroke-width="1.300"/><path d="M6 9 1 14" stroke="#333" stroke-width="1.400"/></svg>
<div class="abs" style="left:74px;top:694px;font-size:14px;line-height:18px;color:#3b3b3b;white-space:nowrap;transform-origin:0 50%;transform:scaleX(.883)">Введіть пошуковий запит тут</div>
<!-- chrome (active) -->
<div class="abs" style="left:329px;top:687px;width:41px;height:33px;background:#efefef"></div>
<div class="abs" style="left:329px;top:718px;width:41px;height:2px;background:#0a63c9"></div>
<svg class="abs" style="left:339px;top:693px" width="20" height="20" viewBox="0 0 20 20"><circle cx="10" cy="10" r="9.500" fill="#fff"/><path d="M10 .5A9.500 9.500 0 0 1 18.230 5.250H10A4.750 4.750 0 0 0 5.890 7.620L1.770 5.250A9.500 9.500 0 0 1 10 .5Z" fill="#ea4335"/><path d="M18.230 5.250A9.500 9.500 0 0 1 10 19.500L14.110 12.380A4.750 4.750 0 0 0 14.110 7.620L10 5.250Z" fill="#fbbc04"/><path d="M10 19.500A9.500 9.500 0 0 1 1.770 5.250L5.890 12.380A4.750 4.750 0 0 0 10 14.750L14.110 12.380Z" fill="#34a853"/><circle cx="10" cy="10" r="4.400" fill="#fff"/><circle cx="10" cy="10" r="3.500" fill="#4285f4"/></svg>
<!-- word -->
<svg class="abs" style="left:380px;top:693px" width="21" height="20" viewBox="0 0 21 20"><rect x="6" y="1" width="14.500" height="18" rx="1.500" fill="#2b7cd3"/><rect x="6" y="1" width="14.500" height="5" fill="#41a5ee"/><rect x="6" y="11" width="14.500" height="8" fill="#185abd"/><rect x="0" y="4.500" width="11" height="11" rx="1.200" fill="#185abd"/><text x="5.500" y="13" font-family="Liberation Sans,sans-serif" font-size="8.500" font-weight="bold" fill="#fff" text-anchor="middle">W</text></svg>
<!-- powerpoint -->
<svg class="abs" style="left:421px;top:693px" width="21" height="20" viewBox="0 0 21 20"><circle cx="12" cy="10" r="9" fill="#ed6c47"/><path d="M12 1A9 9 0 0 1 21 10H12Z" fill="#ff8f6b"/><path d="M21 10A9 9 0 0 1 5 15.600L12 10Z" fill="#d35230"/><rect x="0" y="4.500" width="11" height="11" rx="1.200" fill="#c43e1c"/><text x="5.500" y="13" font-family="Liberation Sans,sans-serif" font-size="8.500" font-weight="bold" fill="#fff" text-anchor="middle">P</text></svg>
<!-- excel -->
<svg class="abs" style="left:463px;top:693px" width="21" height="20" viewBox="0 0 21 20"><rect x="6" y="1" width="14.500" height="18" rx="1.500" fill="#21a366"/><rect x="13" y="1" width="7.500" height="6" fill="#33c481"/><rect x="6" y="13" width="14.500" height="6" fill="#185c37"/><rect x="6" y="7" width="7" height="6" fill="#107c41"/><rect x="0" y="4.500" width="11" height="11" rx="1.200" fill="#107c41"/><text x="5.500" y="13" font-family="Liberation Sans,sans-serif" font-size="8.500" font-weight="bold" fill="#fff" text-anchor="middle">X</text></svg>
<!-- store -->
<svg class="abs" style="left:504px;top:692px" width="21" height="22" viewBox="0 0 21 22"><path d="M6.500 6V4a4 4 0 0 1 8 0v2" fill="none" stroke="#2b2b2b" stroke-width="1.800"/><rect x="1" y="6" width="19" height="15" rx="1" fill="#2e2e2e"/><rect x="6.500" y="9.500" width="3.500" height="3.500" fill="#f25022"/><rect x="11" y="9.500" width="3.500" height="3.500" fill="#7fba00"/><rect x="6.500" y="14" width="3.500" height="3.500" fill="#00a4ef"/><rect x="11" y="14" width="3.500" height="3.500" fill="#ffb900"/></svg>
<!-- instagram -->
<div class="abs" style="left:547px;top:694px;width:18px;height:18px;border-radius:50%;background:#fff"></div>
<svg class="abs" style="left:551px;top:698px" width="10" height="10" viewBox="0 0 10 10"><rect x=".700" y=".700" width="8.600" height="8.600" rx="2.400" fill="none" stroke="#d6337c" stroke-width="1.200"/><circle cx="5" cy="5" r="2" fill="none" stroke="#e8703a" stroke-width="1.100"/></svg>
<!-- telegram -->
<div class="abs" style="left:580px;top:718px;width:35px;height:2px;background:#0a63c9"></div>
<svg class="abs" style="left:587px;top:692px" width="24" height="24" viewBox="0 0 24 24"><circle cx="10.500" cy="10.500" r="10" fill="#2ca5e0"/><path d="M4.500 10.300 15.500 5.700c.600-.200 1 .100.800.900l-1.800 8.600c-.100.600-.500.700-1 .400l-2.700-2-1.300 1.300c-.200.200-.300.300-.600.300l.200-2.800 5-4.500c.200-.200 0-.300-.300-.100L7.600 11.700 5 10.900c-.600-.200-.600-.500-.500-.600Z" fill="#fff"/><rect x="13" y="14" width="11" height="8.500" rx="4" fill="#8d8d8d"/><text x="18.500" y="21" font-family="Liberation Sans,sans-serif" font-size="7" font-weight="bold" fill="#fff" text-anchor="middle">38</text></svg>
<!-- photoshop -->
<svg class="abs" style="left:629px;top:693px" width="20" height="20" viewBox="0 0 20 20"><rect x=".500" y=".500" width="19" height="19" fill="#001d34" stroke="#27a6d9" stroke-width="1"/><text x="10" y="14" font-family="Liberation Sans,sans-serif" font-size="10.500" font-weight="bold" fill="#31c5f0" text-anchor="middle">Ps</text></svg>
<!-- faststone -->
<svg class="abs" style="left:670px;top:692px" width="21" height="22" viewBox="0 0 21 22"><path d="M10.500 1 18 6V17l-7.500 4L3 17V6Z" fill="#f08a2c"/><path d="M3 6 10.500 1 18 6 10.500 11Z" fill="#f5a954"/><rect x="2.500" y="13" width="16" height="7" fill="#d8452c"/><ellipse cx="10.500" cy="10.500" rx="6.500" ry="4" fill="#fff"/><circle cx="10.500" cy="10.500" r="2.800" fill="#1f4fae"/><circle cx="10.500" cy="10.500" r="1.200" fill="#0a1a3a"/></svg>
<!-- explorer -->
<svg class="abs" style="left:711px;top:694px" width="21" height="18" viewBox="0 0 21 18"><path d="M1 2.500a1 1 0 0 1 1-1h5l2 2h10a1 1 0 0 1 1 1V6H1Z" fill="#e9a825"/><rect x="1" y="4.500" width="19" height="12.500" rx="1" fill="#fcd354"/><rect x="5" y="10" width="11" height="7" fill="#3c8fdc"/><rect x="7.500" y="13" width="6" height="4" fill="#fcd354"/></svg>
<!-- tray -->
<svg class="abs" style="left:1032px;top:699px" width="12" height="8" viewBox="0 0 12 8"><path d="M1 7 6 1.800 11 7" fill="none" stroke="#222" stroke-width="1.200"/></svg>
<svg class="abs" style="left:1051px;top:697.500px" width="14.500" height="10" viewBox="0 0 16 11"><path d="M4 10a3 3 0 0 1-.300-6A4.200 4.200 0 0 1 11.700 3.300 3.400 3.400 0 0 1 12.500 10Z" fill="none" stroke="#222" stroke-width="1.200"/></svg>
<svg class="abs" style="left:1073.500px;top:695.500px" width="9" height="15" viewBox="0 0 10 17"><rect x="2.500" y=".500" width="5" height="10" rx="2.500" fill="#111"/><path d="M.800 11.500h8.400M5 12v3M2 16h6" stroke="#111" stroke-width="1.300"/></svg>
<svg class="abs" style="left:1091.500px;top:698.500px" width="14.500" height="8.500" viewBox="0 0 17 10"><path d="M1 .500v4M3 .500v2" stroke="#111" stroke-width="1"/><rect x="3.500" y="2" width="11.500" height="7" fill="none" stroke="#111" stroke-width="1"/><rect x="5" y="3.500" width="7" height="4" fill="#111"/><rect x="15.500" y="4" width="1.200" height="3" fill="#111"/></svg>
<svg class="abs" style="left:1112px;top:696px" width="14" height="14" viewBox="0 0 14 14"><path d="M1 12.500A11.500 11.500 0 0 1 12.500 1M4.800 12.500A7.700 7.700 0 0 1 12.500 4.800M8.500 12.500A4 4 0 0 1 12.500 8.500" fill="none" stroke="#333" stroke-width="1.100"/><circle cx="11.800" cy="11.800" r="1.300" fill="#333"/></svg>
<svg class="abs" style="left:1131px;top:696px" width="16" height="13" viewBox="0 0 16 13"><path d="M1 4.500h2.500L7 1.500v10L3.500 8.500H1Z" fill="none" stroke="#222" stroke-width="1.100"/><path d="M9.500 4.500a3 3 0 0 1 0 4" fill="none" stroke="#222" stroke-width="1"/><path d="M11.500 2.500a6 6 0 0 1 0 8" fill="none" stroke="#999" stroke-width="1"/></svg>
<div class="abs" style="left:1155px;top:696px;font-size:11px;line-height:14px;color:#111;white-space:nowrap;transform-origin:0 50%;transform:scaleX(.82)">УКР</div>
<div class="abs" style="left:1196.500px;top:689px;font-size:11px;line-height:14px;color:#111;white-space:nowrap;transform-origin:0 50%;transform:scaleX(.77)">16:38</div>
<div class="abs" style="left:1184px;top:704px;font-size:11px;line-height:14px;color:#111;white-space:nowrap;transform-origin:0 50%;transform:scaleX(.824)">19.05.2021</div>
<svg class="abs" style="left:1246px;top:695px" width="20" height="19" viewBox="0 0 20 19"><path d="M1 1h12.500v9.500H5L1 13.500Z" fill="#111"/><path d="M3 3.500h8M3 5.500h8M3 7.500h8" stroke="#d7d7d7" stroke-width=".8"/><circle cx="13.500" cy="12.500" r="5" fill="#d7d7d7" stroke="#555" stroke-width=".8"/><text x="13.500" y="15.500" font-family="Liberation Sans,sans-serif" font-size="8" fill="#111" text-anchor="middle">1</text></svg>

<!--/TASKBAR-->

</div>
</body>
</html>
